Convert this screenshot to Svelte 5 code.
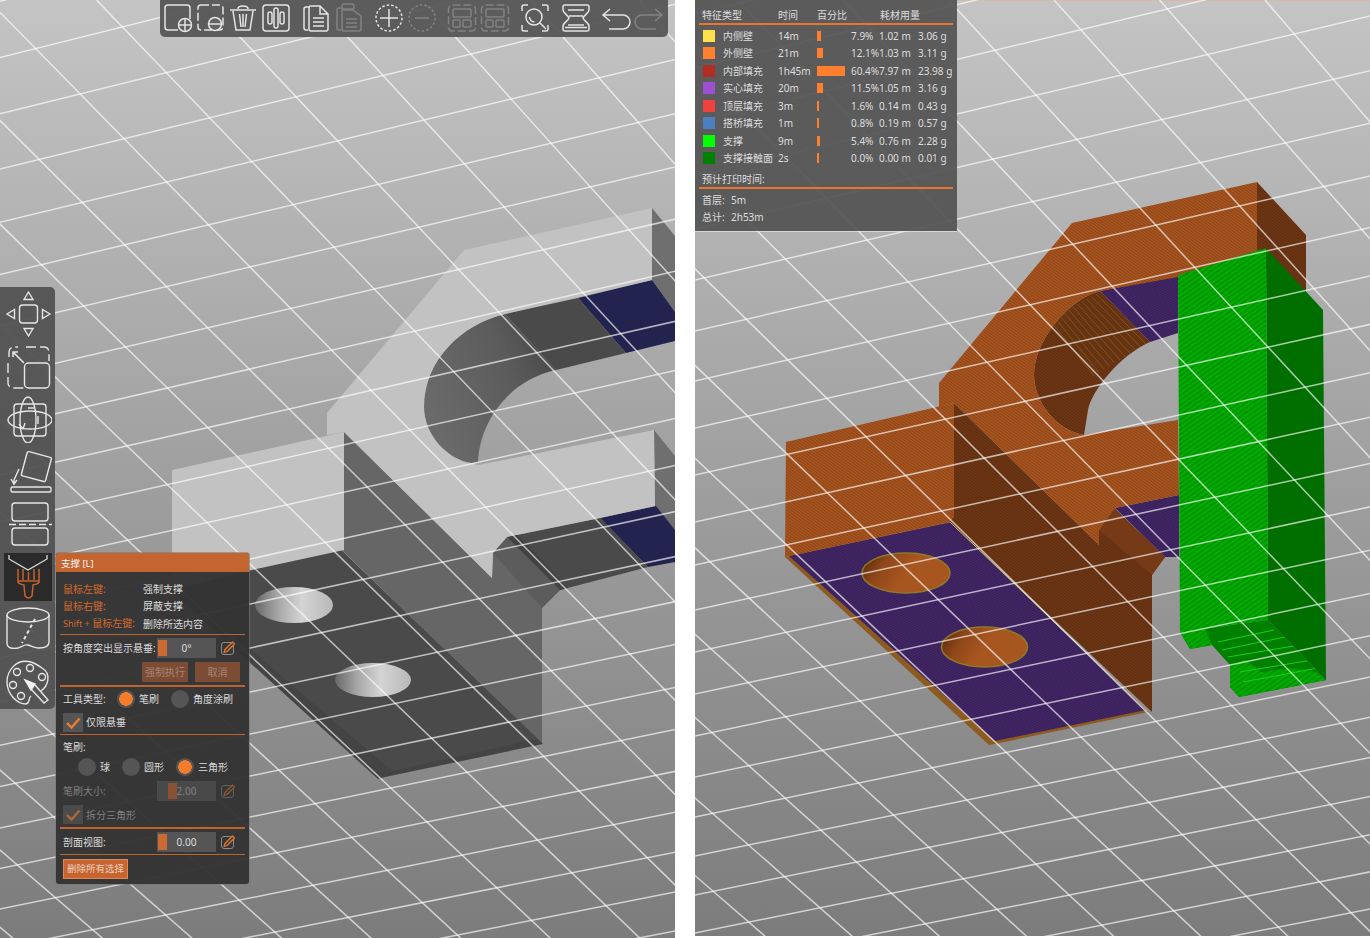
<script>
  const leftYs = [-62,-5,52,108,162,215,267,318,369,418,466,513,559,604,648,692,734,776,817,858,898,937,976,1014,1052];
  const leftA = leftYs.map((Y) => {
    const m = -0.2497 + 5.35e-5 * Y;
    return { x1: -5, y1: Y + m * -255, x2: 680, y2: Y + m * 430 };
  });
  const leftB = [];
  for (let n = -11; n <= 8; n++) {
    const x0 = -12 + 108.5 * n;
    const k = 0.979 - 1.86e-4 * x0;
    leftB.push({ x1: x0, y1: 0, x2: x0 + k * 940, y2: 940 });
  }
  const rightYs = [-40,14,68,122,176,229,280,331,381,428,475,522,565,610,652,694,736,777,817,856,895,933,970,1006,1042,1078,1112];
  const rightA = rightYs.map((y0) => {
    const m = -0.245 + 4.6e-5 * y0;
    return { x1: 690, y1: y0 - m * 5, x2: 1375, y2: y0 + m * 680 };
  });
  const rightB = [];
  for (let n = -12; n <= 6; n++) {
    const x0 = 148 + 105.5 * n;
    const k = 0.968 - 1.86e-4 * x0;
    rightB.push({ x1: 695 + x0, y1: 0, x2: 695 + x0 + k * 940, y2: 940 });
  }
  const stripes = Array.from({ length: 11 }, (_, i) => ({
    x1: 1096 - 4.6 * i, y1: 294 + 2.6 * i, x2: 1146 - 5.2 * i, y2: 344 + 3.2 * i
  }));

  const features = [
    { name: '内侧壁', time: '14m', bar: 'b4', pct: '7.9%', len: '1.02 m', g: '3.06 g', c: 'c1' },
    { name: '外侧壁', time: '21m', bar: 'b5', pct: '12.1%', len: '1.03 m', g: '3.11 g', c: 'c2' },
    { name: '内部填充', time: '1h45m', bar: 'b28', pct: '60.4%', len: '7.97 m', g: '23.98 g', c: 'c3' },
    { name: '实心填充', time: '20m', bar: 'b5', pct: '11.5%', len: '1.05 m', g: '3.16 g', c: 'c4' },
    { name: '顶层填充', time: '3m', bar: 'b1', pct: '1.6%', len: '0.14 m', g: '0.43 g', c: 'c5' },
    { name: '搭桥填充', time: '1m', bar: 'b1', pct: '0.8%', len: '0.19 m', g: '0.57 g', c: 'c6' },
    { name: '支撑', time: '9m', bar: 'b3', pct: '5.4%', len: '0.76 m', g: '2.28 g', c: 'c7' },
    { name: '支撑接触面', time: '2s', bar: 'b1', pct: '0.0%', len: '0.00 m', g: '0.01 g', c: 'c8' }
  ];
</script>

{#snippet pencil(dim)}
  <svg class="pencil" class:dim viewBox="0 0 16 16" width="16" height="16">
    <rect x="1.5" y="2.5" width="12" height="12" rx="2.5" fill="none" stroke="#8c8c8c" stroke-width="1"/>
    <path d="M4 12.5 L5 9.5 L12.5 2 L14.5 4 L7 11.5 Z" fill="#3a3a3a" stroke="#e8772e" stroke-width="1.3" stroke-linejoin="round"/>
  </svg>
{/snippet}

{#snippet check()}
  <svg viewBox="0 0 20 19" width="20" height="19">
    <path d="M4 10 L8.5 14.5 L16.5 5.5" fill="none" stroke="#f07d2c" stroke-width="2.4"/>
  </svg>
{/snippet}

<div class="page">
  <section class="view">
    <svg class="scene" viewBox="0 0 675 938" width="675" height="938">
      <defs>
        <linearGradient id="cylL" gradientUnits="userSpaceOnUse" x1="426" y1="400" x2="560" y2="350">
          <stop offset="0" stop-color="#6a6a6a"/><stop offset="0.6" stop-color="#5c5c5c"/><stop offset="1" stop-color="#474747"/>
        </linearGradient>
        <linearGradient id="holeL" x1="0" y1="0" x2="1" y2="0">
          <stop offset="0" stop-color="#686868"/><stop offset="0.3" stop-color="#a8a8a8"/><stop offset="0.6" stop-color="#d4d4d4"/><stop offset="1" stop-color="#b8b8b8"/>
        </linearGradient>
      </defs>
      <path d="M652 208 L675 236 L675 312 L652 280 Z" fill="#6f6f6f"/>
      <path d="M654 430 L675 456 L675 530 L655 506 Z" fill="#6f6f6f"/>
      <path d="M578 298 L652 280 L675 312 L675 341 L626 353 Z" fill="#232350"/>
      <path d="M600 518 L656 506 L675 530 L675 562 L648 567 Z" fill="#232350"/>
      <path d="M505 314 L578 298 L626 353 L556 370 Z" fill="#4a4a4a"/>
      <path d="M505 314 C462 324 424 360 424 407 C424 435 448 460 471 463 L478 462 C480 420 510 380 556 370 Z" fill="url(#cylL)"/>
      <path d="M344 432 L492 578 L493 553 L507 537 L560 590 L542 608 L542 744 L342 550 Z" fill="#666"/>
      <path d="M507 537 L600 518 L648 567 L560 590 Z" fill="#4a4a4a"/>
      <path d="M493 553 L507 537 L560 590 L542 608 Z" fill="#5c5c5c"/>
      <path d="M507 537 L517 534 L568 588 L560 590 Z" fill="#424242"/>
      <path d="M170 590 L341 550 L543 744 L385 777 L378 779 Z" fill="#444"/>
      <path d="M170 580 L341 550 L537 739 L392 771 Z" fill="#4a4a4a"/>
      <ellipse cx="294" cy="605" rx="39" ry="18" fill="url(#holeL)"/>
      <ellipse cx="373" cy="680" rx="38" ry="17" fill="url(#holeL)"/>
      <path d="M172 470 L344 432 L344 550 L252 570 L172 590 Z" fill="#c2c2c2"/>
      <path d="M652 208 L652 280 L505 314 C462 324 424 360 424 407 C424 435 448 460 471 463 L478 465 L654 430 L655 506 L600 518 L507 537 L493 553 L492 578 L344 432 L327 435 L327 413 L464 250 Z" fill="#c2c2c2"/>
      <g class="grid">
        {#each leftA as l}<line x1={l.x1} y1={l.y1} x2={l.x2} y2={l.y2}/>{/each}
        {#each leftB as l}<line x1={l.x1} y1={l.y1} x2={l.x2} y2={l.y2}/>{/each}
      </g>
    </svg>

    <div class="toolbar">
      <svg class="ti" viewBox="0 0 30 30"><path d="M15 27 H5 a3 3 0 0 1 -3 -3 V5 a3 3 0 0 1 3 -3 H24 a3 3 0 0 1 3 3 V16"/><circle cx="22" cy="22" r="6.5"/><path d="M22 16 V28 M16 22 H28"/></svg>
      <svg class="ti" viewBox="0 0 30 30"><rect class="dash" x="2" y="2" width="25" height="25" rx="3"/><circle cx="19" cy="21" r="6.5" class="solid"/><path d="M13 21 H25"/></svg>
      <svg class="ti" viewBox="0 0 30 30"><path d="M2 7 H28 M10 6 C10 2 20 2 20 6 M5 8 L8 27 H22 L25 8 M11.5 11 L13 24 M15 11 V24 M18.5 11 L17 24"/></svg>
      <svg class="ti" viewBox="0 0 30 30"><rect x="2" y="2" width="26" height="26" rx="3"/><rect x="7" y="9" width="4" height="12" rx="2"/><rect x="13" y="5" width="4" height="20" rx="2"/><rect x="19" y="9" width="4" height="12" rx="2"/></svg>
      <svg class="ti g" viewBox="0 0 30 30"><path d="M7 27 H5 a2 2 0 0 1 -2 -2 V6 a2 2 0 0 1 2 -2 H8"/><path d="M8 5 a2 2 0 0 1 2 -2 H19 L27 11 V26 a2 2 0 0 1 -2 2 H10 a2 2 0 0 1 -2 -2 Z M19 3 V11 H27 M12 15 H23 M12 19 H23 M12 23 H23"/></svg>
      <svg class="ti dimi" viewBox="0 0 30 30"><rect x="8" y="1" width="12" height="5" rx="2"/><path d="M7 27 H5 a2 2 0 0 1 -2 -2 V7 a2 2 0 0 1 2 -2 H8"/><path d="M8 7 H19 L27 13 V26 a2 2 0 0 1 -2 2 H10 a2 2 0 0 1 -2 -2 Z M12 16 H23 M12 20 H23 M12 24 H23"/></svg>
      <svg class="ti g" viewBox="0 0 30 30"><circle class="dash2" cx="15" cy="15" r="13"/><path d="M15 6 V24 M6 15 H24"/></svg>
      <svg class="ti dimi" viewBox="0 0 30 30"><circle class="dash2" cx="15" cy="15" r="13"/><path d="M8 15 H22"/></svg>
      <svg class="ti g dimi" viewBox="0 0 30 30"><rect class="dash" x="1.5" y="2" width="27" height="26" rx="4"/><rect x="6" y="6" width="18" height="8" rx="1"/><rect x="6" y="17" width="7" height="7" rx="1"/><rect x="16" y="17" width="8" height="7" rx="1"/></svg>
      <svg class="ti dimi" viewBox="0 0 30 30"><rect class="dash" x="1.5" y="2" width="27" height="26" rx="4"/><rect x="6" y="6" width="18" height="8" rx="1"/><rect x="6" y="17" width="7" height="7" rx="1"/><rect x="16" y="17" width="8" height="7" rx="1"/></svg>
      <svg class="ti g" viewBox="0 0 30 30"><path d="M2 8 V4 a2 2 0 0 1 2 -2 H8 M22 2 H26 a2 2 0 0 1 2 2 V8 M2 22 V26 a2 2 0 0 0 2 2 H8 M22 28 H26 a2 2 0 0 0 2 -2 V22"/><circle cx="14" cy="14" r="8"/><path d="M20 20 L26 26 M9.5 14 a5 5 0 0 0 5 5"/></svg>
      <svg class="ti g" viewBox="0 0 30 30"><path d="M4 2 H26 a2 2 0 0 1 2 2 V7 C28 10 23 12 22 15 C23 18 28 20 28 23 V26 a2 2 0 0 1 -2 2 H4 a2 2 0 0 1 -2 -2 V23 C2 20 7 18 8 15 C7 12 2 10 2 7 V4 a2 2 0 0 1 2 -2 Z M7 7 H23 M8 13 H22 M7 22 H23 M4 24.5 H26"/></svg>
      <svg class="ti g" viewBox="0 0 30 30"><path d="M9 6 L2 12 L9 18 M2 12 H22 a6 6 0 0 1 0 14 H8"/></svg>
      <svg class="ti dimi" viewBox="0 0 30 30"><path d="M21 6 L28 12 L21 18 M28 12 H8 a6 6 0 0 0 0 14 H22"/></svg>
    </div>

    <div class="sidebar">
      <svg class="si" viewBox="0 0 48 48"><rect x="15.5" y="15" width="18" height="18" rx="3"/><path d="M24.5 2 L29 9.5 H20 Z M24.5 46 L29 38.5 H20 Z M3 24 L10.5 19.5 V28.5 Z M46 24 L38.5 19.5 V28.5 Z"/></svg>
      <svg class="si" viewBox="0 0 48 48"><path class="dash3" d="M22 4 H40 a5 5 0 0 1 5 5 V18 M4 20 V40 a5 5 0 0 0 5 5 H20 M5 14 V9 a5 5 0 0 1 5 -5 H14"/><rect x="20.5" y="20" width="25" height="25" rx="4"/><path d="M10 10 L20 20 M9 14 V9 H14" class="thick"/></svg>
      <svg class="si" viewBox="0 0 48 48"><rect x="10" y="9" width="32" height="32" rx="3"/><ellipse cx="26" cy="25" rx="22" ry="9"/><ellipse cx="24" cy="25" rx="8" ry="23"/><path d="M19 34 L21 28 M19 34 L15 29 M24 13 H30 M34 21 V29"/></svg>
      <svg class="si" viewBox="0 0 48 48"><rect x="20" y="6" width="25" height="25" rx="1.5" transform="rotate(15 32 18)"/><rect x="7" y="39" width="40" height="5" rx="1.5"/><path d="M15 21 L10 32 V37 M7 31 L10 36 L13 32"/></svg>
      <svg class="si" viewBox="0 0 48 48"><rect x="8" y="3" width="36" height="18" rx="3"/><rect x="8" y="28" width="36" height="17" rx="3"/><path d="M5 24.5 H49" stroke-dasharray="7 3"/></svg>
      <div class="selected">
        <svg viewBox="0 0 48 48" width="48" height="48"><path d="M5 2 V6 L24 17 L43 6 V2" fill="none" stroke="#ddd" stroke-width="1.3"/><path d="M14 16 V29 C14 31 17 31 20 32 V33 L21 43 Q24.5 47 28 43 L29 33 V32 C32 31 35 31 35 29 V16 M14 28 H35 M19 16 V27 M24.5 19 V27 M30 16 V27" fill="none" stroke="#c5632c" stroke-width="1.5"/></svg>
      </div>
      <svg class="si" viewBox="0 0 48 48"><ellipse cx="24" cy="10" rx="21" ry="7"/><path d="M3 10 V38 C3 43 8 44 14 43 C18 42 20 39 24 40 C28 41 30 43 35 43 C41 43 45 41 45 37 V10"/><path d="M31 14 L18 38" stroke-dasharray="3.5 3" stroke-width="2"/></svg>
      <svg class="si" viewBox="0 0 48 48"><path d="M27 4 C12 0 3 13 3 24 C3 36 13 46 22 46 C26 46 24 40 27 38 M37 33 C44 28 48 16 38 10 C35 8 31 5 27 4"/><circle cx="26" cy="10" r="3.5"/><circle cx="13" cy="14" r="3.5"/><circle cx="38" cy="19" r="3.5"/><circle cx="9" cy="27" r="3.5"/><circle cx="17" cy="38" r="3.5"/><path d="M21 22 L31 26 L27 32 Z" fill="#f2f2f2" stroke="#f2f2f2"/><path d="M27 31 L40 45 L44 42 L31 27" /></svg>
    </div>

    <div class="panel">
      <div class="head">支撑 [L]</div>
      <div class="pbody">
        <div class="keys">
          <span class="k">鼠标左键:</span><span>强制支撑</span>
          <span class="k">鼠标右键:</span><span>屏蔽支撑</span>
          <span class="k"><span class="narrow">Shift +</span> 鼠标左键:</span><span>删除所选内容</span>
        </div>
        <div class="sep s1"></div>
        <div class="row r-slider first">
          <span class="lab">按角度突出显示悬垂:</span>
          <div class="slider"><i class="knob"></i><span>0°</span></div>
          {@render pencil(false)}
        </div>
        <div class="btns"><span class="btn">强制执行</span><span class="btn b2">取消</span></div>
        <div class="sep s2"></div>
        <div class="row tools">
          <span class="tlab">工具类型:</span>
          <i class="radio on"></i><span class="rl wide">笔刷</span>
          <i class="radio"></i><span class="rl">角度涂刷</span>
        </div>
        <div class="row chk">
          <div class="box">{@render check()}</div><span>仅限悬垂</span>
        </div>
        <div class="sep s3"></div>
        <div class="row sub">笔刷:</div>
        <div class="row shapes">
          <i class="radio"></i><span class="rl a">球</span>
          <i class="radio"></i><span class="rl wide">圆形</span>
          <i class="radio on"></i><span class="rl">三角形</span>
        </div>
        <div class="row r-slider size off">
          <span class="lab">笔刷大小:</span>
          <div class="slider"><i class="knob mid"></i><span>2.00</span></div>
          {@render pencil(true)}
        </div>
        <div class="row chk chk2 off">
          <div class="box">{@render check()}</div><span>拆分三角形</span>
        </div>
        <div class="sep s4"></div>
        <div class="row r-slider clip">
          <span class="lab">剖面视图:</span>
          <div class="slider"><i class="knob"></i><span>0.00</span></div>
          {@render pencil(false)}
        </div>
        <div class="sep s5"></div>
        <div class="clear">删除所有选择</div>
      </div>
    </div>
  </section>

  <section class="view second">
    <svg class="scene" viewBox="695 0 675 938" width="675" height="938">
      <defs>
        <pattern id="hO" width="2.4" height="2.4" patternUnits="userSpaceOnUse" patternTransform="rotate(35)"><rect width="3" height="3" fill="#a5531f"/><rect width="3" height="0.8" fill="#8e4518"/></pattern>
        <pattern id="hD" width="2.4" height="2.4" patternUnits="userSpaceOnUse" patternTransform="rotate(35)"><rect width="3" height="3" fill="#6c3514"/><rect width="3" height="0.8" fill="#5f2d10"/></pattern>
        <pattern id="hP" width="2.2" height="2.2" patternUnits="userSpaceOnUse" patternTransform="rotate(-30)"><rect width="3" height="3" fill="#432569"/><rect width="3" height="0.8" fill="#34204f"/></pattern>
        <pattern id="hG" width="4" height="4" patternUnits="userSpaceOnUse" patternTransform="rotate(-35)"><rect width="4" height="4" fill="#00ad00"/><rect width="4" height="1.4" fill="#008a00"/></pattern>
        <linearGradient id="holeO" x1="0" y1="0" x2="1" y2="0.3">
          <stop offset="0" stop-color="#4f2509"/><stop offset="0.3" stop-color="#8f4719"/><stop offset="0.6" stop-color="#a8561f"/><stop offset="1" stop-color="#a8561f"/>
        </linearGradient>
      </defs>
      <rect x="695" width="675" height="1" fill="#d8b9a8"/>
      <path d="M1257 182 L1306 235 L1306 292 L1257 262 Z" fill="url(#hD)"/>
      <path d="M1100 291 L1178 275 L1178 333 L1150 342 Z" fill="url(#hP)"/>
      <path d="M1100 291 C1070 298 1034 340 1034 375 C1034 400 1055 430 1084 435 L1088 410 C1092 390 1120 355 1150 342 Z" fill="url(#hD)"/>
      <g stroke="#7d6c1c" stroke-width="0.9" stroke-opacity="0.75">
        {#each stripes as s}<line x1={s.x1} y1={s.y1} x2={s.x2} y2={s.y2}/>{/each}
      </g>
      <path d="M1115 508 L1179 495 L1179 557 L1165 557 Z" fill="url(#hP)"/>
      <path d="M954 403 L1099 545 L1099 530 L1114 508 L1165 557 L1152 575 L1152 712 L950 522 Z" fill="url(#hD)"/>
      <path d="M1099 530 L1114 508 L1165 557 L1152 575 Z" fill="#763a16"/>
      <path d="M785 557 L950 522 L1148 712 L995 744 L989 745 Z" fill="#8d5a20"/>
      <path d="M789 556 L950 522.5 L1146 710 L995 741 Z" fill="url(#hP)"/>
      <path d="M950 522 L1147 711" stroke="#b9b168" stroke-width="1"/>
      <ellipse cx="906" cy="573" rx="44" ry="20" fill="url(#holeO)" stroke="#8c7a28" stroke-width="1.6"/>
      <ellipse cx="984.5" cy="647" rx="43" ry="20" fill="url(#holeO)" stroke="#8c7a28" stroke-width="1.6"/>
      <path d="M786 442 L954 403 L954 517 L950 522 L785 557 Z" fill="url(#hO)"/>
      <path d="M1257 182 L1257 262 L1178 277 L1100 291 C1070 298 1034 340 1034 375 C1034 400 1055 430 1084 435 L1178 420 L1179 495 L1115 508 L1099 530 L1099 545 L954 403 L939 407 L939 383 L1072 223 Z" fill="url(#hO)"/>
      <path d="M1180 632 L1190 649 L1212 645 L1230 665 L1230 687 L1239 697 L1326 680 L1268 620 Z" fill="#007f00"/>
      <path d="M1180 632 L1190 649 L1212 645 L1205 628 Z M1230 665 L1230 687 L1239 697 L1326 680 L1316 672 L1290 668 L1262 672 L1245 660 Z" fill="url(#hG)"/>
      <g stroke="#18d018" stroke-width="1">
        <line x1="1218" y1="642" x2="1274" y2="630"/><line x1="1222" y1="650" x2="1290" y2="636"/><line x1="1228" y1="657" x2="1300" y2="645"/><line x1="1240" y1="672" x2="1312" y2="660"/><line x1="1243" y1="682" x2="1318" y2="668"/>
      </g>
      <path d="M1266 248 L1323 310 L1326 680 L1268 620 Z" fill="#006f00"/>
      <path d="M1178 275 L1266 248 L1268 620 L1180 632 Z" fill="url(#hG)"/>
      <g class="grid">
        {#each rightA as l}<line x1={l.x1} y1={l.y1} x2={l.x2} y2={l.y2}/>{/each}
        {#each rightB as l}<line x1={l.x1} y1={l.y1} x2={l.x2} y2={l.y2}/>{/each}
      </g>
    </svg>

    <div class="stats">
      <div class="thead">
        <span class="c-name">特征类型</span><span class="c-time">时间</span><span class="c-pct">百分比</span><span>耗材用量</span>
      </div>
      <div class="ssep"></div>
      {#each features as f}
        <div class="trow">
          <i class="sw {f.c}"></i>
          <span class="n">{f.name}</span>
          <span class="t">{f.time}</span>
          <span class="bcell"><i class="bar {f.bar}"></i></span>
          <span class="p">{f.pct}</span>
          <span class="l">{f.len}</span>
          <span>{f.g}</span>
        </div>
      {/each}
      <div class="est">预计打印时间:</div>
      <div class="ssep s-b"></div>
      <div class="sum"><span>首层:</span><span>5m</span></div>
      <div class="sum"><span>总计:</span><span>2h53m</span></div>
    </div>
  </section>
</div>

<style>
  :global(body) { margin: 0; background: #fff; }
  .page {
    display: flex; gap: 20px; width: 1370px; height: 938px; overflow: hidden;
    font-family: "Noto Sans", "Noto Sans CJK SC", sans-serif; font-size: 10px; color: #e2e2e2;
  }
  .view {
    position: relative; width: 675px; height: 938px; overflow: hidden; flex: none;
    background: linear-gradient(#c4c4c4, #7c7c7c);
  }
  .second { height: 936px; }
  .scene { display: block; }
  .grid line { stroke: rgba(255,255,255,.66); stroke-width: 1.5; }

  .toolbar {
    position: absolute; left: 160px; top: 0; width: 508px; height: 37px; box-sizing: border-box;
    padding: 3px 0 0 3px; display: flex; gap: 2.5px; align-items: flex-start;
    background: rgba(84,84,84,.93); border-radius: 0 0 5px 5px;
  }
  .ti { width: 30px; height: 30px; flex: none; fill: none; stroke: #e4e4e4; stroke-width: 1.5; }
  .ti.g { margin-left: 8px; }
  .dimi { opacity: .28; }
  .dash { stroke-dasharray: 8 3; }
  .dash2 { stroke-dasharray: 2.5 2; }
  .solid { fill: #636363; }

  .sidebar {
    position: absolute; left: 0; top: 287px; width: 55px; height: 422px; box-sizing: border-box;
    padding-top: 3px; display: flex; flex-direction: column; align-items: center; gap: 4.5px;
    background: rgba(82,82,82,.95); border-radius: 0 5px 5px 0;
  }
  .si { width: 48px; height: 48px; flex: none; fill: none; stroke: #e6e6e6; stroke-width: 1.4; }
  .dash3 { stroke-dasharray: 10 4; }
  .thick { stroke-width: 1.6; }
  .selected { width: 48px; height: 48px; flex: none; background: #2a2a2a; }

  .panel {
    position: absolute; left: 56px; top: 553px; width: 193px; height: 331px;
    background: rgba(52,52,52,.97); border-radius: 3px; box-shadow: 0 0 0 1px rgba(120,120,120,.6);
    overflow: hidden; line-height: 14px; color: #dcdcdc;
  }
  .head { height: 19px; background: #c4642f; color: #f5f5f5; padding-left: 5px; line-height: 21px; font-size: 9.5px; }
  .pbody { display: flex; flex-direction: column; }
  .keys {
    display: grid; grid-template-columns: 80px auto; grid-auto-rows: 17.6px; align-items: center;
    padding: 8px 0 0 7px;
  }
  .k { color: #d4692c; white-space: nowrap; }
  .narrow { font-size: 9px; }
  .sep { height: 1.5px; margin: 0 4px; background: #bd6430; flex: none; }
  .s1 { margin-top: 1px; }
  .row { display: flex; align-items: center; padding-left: 7px; }
  .r-slider { height: 20px; margin-top: 1.5px; }
  .first { margin-top: 2.5px; }
  .lab { width: 94px; white-space: nowrap; flex: none; }
  .slider {
    position: relative; width: 59px; height: 20px; background: #555; flex: none; text-align: center;
    line-height: 20px; margin-right: 4px;
  }
  .knob { position: absolute; left: 1px; top: 2px; width: 9px; height: 16px; background: #cc6a33; }
  .knob.mid { left: 11px; }
  .slider span { position: relative; }
  .btns { display: flex; gap: 7px; padding-left: 86px; margin-top: 4px; }
  .btn { width: 46px; height: 20px; line-height: 20px; text-align: center; background: #7d4c35; color: #a58673; }
  .b2 { width: 45px; }
  .s2 { margin-top: 3.5px; }
  .radio { display: block; width: 18px; height: 18px; border-radius: 50%; background: #555; flex: none; position: relative; }
  .radio.on { background: radial-gradient(circle, #f57c2a 0 6.5px, #555 7px); }
  .rl { margin-left: 4px; }
  .rl.wide { width: 32px; }
  .tools { height: 20px; margin-top: 2px; }
  .tlab { width: 54px; flex: none; }
  .chk { gap: 3px; margin-top: 4px; height: 19px; }
  .box { width: 20px; height: 19px; background: #555; flex: none; }
  .box svg { display: block; }
  .s3 { margin-top: 2px; }
  .sub { height: 14px; margin-top: 5px; }
  .shapes { height: 20px; margin-top: 3px; padding-left: 22px; }
  .rl.a { width: 22px; }
  .size { margin-top: 4px; }
  .off { color: #808080; }
  .off .slider { background: #494949; }
  .off .knob { background: #8a5234; }
  .chk2 { margin-top: 4px; }
  .off .box { background: #4b4b4b; }
  .off .box svg { opacity: .6; }
  .pencil { display: block; flex: none; }
  .pencil.dim { opacity: .5; }
  .s4 { margin-top: 3px; }
  .clip { margin-top: 3px; }
  .s5 { margin-top: 2px; }
  .clear {
    align-self: flex-start; margin: 4px 0 0 7px; width: 65px; height: 20px; box-sizing: border-box;
    background: #c8652f; border: 1px solid #d98a5c; color: #e6d0c0; line-height: 18px; text-align: center;
    font-size: 9.5px; white-space: nowrap;
  }

  .stats {
    position: absolute; left: 0; top: 0; width: 262px; height: 231px; box-sizing: border-box;
    padding: 8px 4px 0 4px; background: rgba(82,82,82,.92); line-height: 14px; color: #dedede;
    box-shadow: 0 1px 0 rgba(230,230,230,.7);
  }
  .thead { display: flex; padding-left: 3px; height: 15px; }
  .c-name { width: 76px; }
  .c-time { width: 39px; }
  .c-pct { width: 63px; }
  .ssep { height: 2px; background: #e8772e; margin-bottom: 2px; }
  .trow {
    display: grid; grid-template-columns: 20px 55px 39px 34px 28px 39px auto; align-items: center;
    height: 17.5px; padding-left: 4px; white-space: nowrap;
  }
  .sw { display: block; width: 12px; height: 12px; }
  .c1 { background: #ffe04a; } .c2 { background: #ff8030; } .c3 { background: #b22d24; }
  .c4 { background: #9a50d0; } .c5 { background: #f04040; } .c6 { background: #4a80c0; }
  .c7 { background: #00ff00; } .c8 { background: #008000; }
  .bcell { display: flex; align-items: center; }
  .bar { display: block; height: 10px; background: #ff7f2e; }
  .b1 { width: 1.5px; } .b3 { width: 3px; } .b4 { width: 4px; } .b5 { width: 5.5px; } .b28 { width: 28px; }
  .est { margin-top: 5px; padding-left: 3px; height: 15px; }
  .s-b { margin-bottom: 4px; }
  .sum { display: flex; padding-left: 3px; height: 17px; }
  .sum span:first-child { width: 29px; }
</style>
